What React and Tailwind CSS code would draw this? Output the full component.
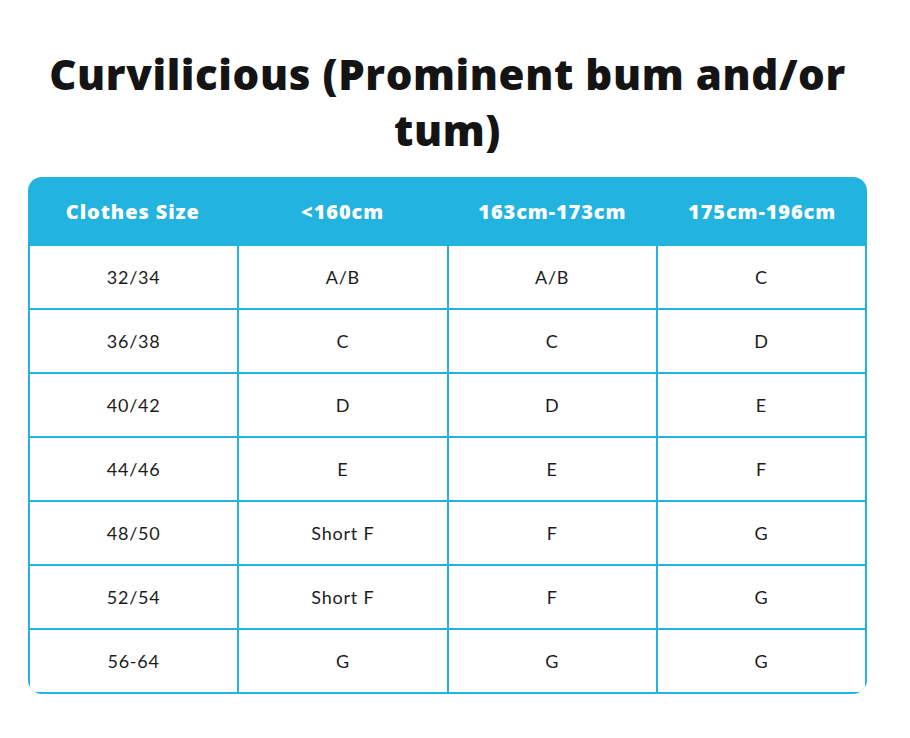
import React from "react";

const headers = ["Clothes Size", "<160cm", "163cm-173cm", "175cm-196cm"];
const rows = [
  ["32/34", "A/B", "A/B", "C"],
  ["36/38", "C", "C", "D"],
  ["40/42", "D", "D", "E"],
  ["44/46", "E", "E", "F"],
  ["48/50", "Short F", "F", "G"],
  ["52/54", "Short F", "F", "G"],
  ["56-64", "G", "G", "G"],
];

export default function App() {
  return (
    <div className="min-h-[738px] w-[910px] bg-white">
      <div className="ml-[28px] w-[839px] pt-[46px]">
        <h1 className="text-center text-[42px] leading-[56px] font-extrabold text-[#141414] font-['Open_Sans',sans-serif] tracking-[0.6px]">
          Curvilicious (Prominent bum and/or
          <br />
          tum)
        </h1>
        <div className="mt-[19px] rounded-[14px] overflow-hidden bg-[#22b4de]">
          <div className="grid grid-cols-4 h-[69px] items-center">
            {headers.map((h) => (
              <div
                key={h}
                className="text-center text-white text-[20px] font-extrabold font-['Open_Sans',sans-serif] tracking-[0.9px]"
              >
                {h}
              </div>
            ))}
          </div>
          <div className="grid grid-cols-4 gap-[2px] px-[2px] pb-[2px]">
            {rows.flat().map((c, i) => (
              <div
                key={i}
                className="bg-white h-[62px] flex items-center justify-center text-[18px] text-[#1c1c1c] font-['Lato',sans-serif] tracking-[0.8px]"
              >
                {c}
              </div>
            ))}
          </div>
        </div>
      </div>
    </div>
  );
}
